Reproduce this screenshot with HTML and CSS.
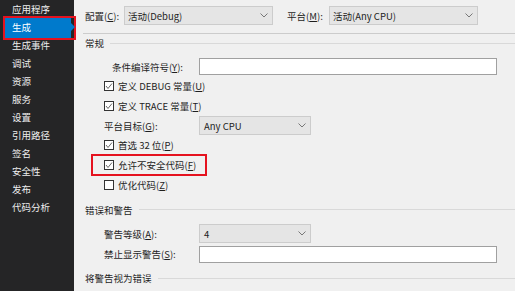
FILE: index.html
```html
<!DOCTYPE html>
<html lang="zh-CN">
<head>
  <meta charset="UTF-8" />
  <meta name="viewport" content="width=device-width, initial-scale=1.0"/>
  <title>生成</title>
  <link rel="stylesheet" href="styles.css">
</head>
<body>
<div class="window">

  <nav class="sidebar">
    <div class="nav-item">应用程序</div>
    <div class="nav-item selected">生成</div>
    <div class="nav-item">生成事件</div>
    <div class="nav-item">调试</div>
    <div class="nav-item">资源</div>
    <div class="nav-item">服务</div>
    <div class="nav-item">设置</div>
    <div class="nav-item">引用路径</div>
    <div class="nav-item">签名</div>
    <div class="nav-item">安全性</div>
    <div class="nav-item">发布</div>
    <div class="nav-item">代码分析</div>
  </nav>

  <main class="page">
    <div class="config-bar">
      <span class="bar-label">配置(<u>C</u>):</span>
      <div class="combo wide">
        <span>活动(Debug)</span>
        <svg class="chevron" width="8" height="5" viewBox="0 0 8 5"><polyline points="0.5,0.5 4,4 7.5,0.5" fill="none" stroke="#777" stroke-width="1"/></svg>
      </div>
      <span class="bar-label second">平台(<u>M</u>):</span>
      <div class="combo wide">
        <span>活动(Any CPU)</span>
        <svg class="chevron" width="8" height="5" viewBox="0 0 8 5"><polyline points="0.5,0.5 4,4 7.5,0.5" fill="none" stroke="#777" stroke-width="1"/></svg>
      </div>
    </div>

    <div class="divider"></div>

    <section class="group">
      <div class="group-title"><span>常规</span><i></i></div>

      <div class="row field first">
        <span class="field-label right">条件编译符号(<u>Y</u>):</span>
        <div class="textbox long"></div>
      </div>

      <div class="row check">
        <span class="box"><svg width="8" height="8" viewBox="0 0 8 8"><polyline points="1,4 3,6.5 7,1.5" fill="none" stroke="#555" stroke-width="0.9"/></svg></span>
        <span>定义 DEBUG 常量(<u>U</u>)</span>
      </div>

      <div class="row check">
        <span class="box"><svg width="8" height="8" viewBox="0 0 8 8"><polyline points="1,4 3,6.5 7,1.5" fill="none" stroke="#555" stroke-width="0.9"/></svg></span>
        <span>定义 TRACE 常量(<u>T</u>)</span>
      </div>

      <div class="row field">
        <span class="field-label">平台目标(<u>G</u>):</span>
        <div class="combo short">
          <span>Any CPU</span>
          <svg class="chevron" width="8" height="5" viewBox="0 0 8 5"><polyline points="0.5,0.5 4,4 7.5,0.5" fill="none" stroke="#777" stroke-width="1"/></svg>
        </div>
      </div>

      <div class="row check">
        <span class="box"><svg width="8" height="8" viewBox="0 0 8 8"><polyline points="1,4 3,6.5 7,1.5" fill="none" stroke="#555" stroke-width="0.9"/></svg></span>
        <span>首选 32 位(<u>P</u>)</span>
      </div>

      <div class="row check marked">
        <span class="box"><svg width="8" height="8" viewBox="0 0 8 8"><polyline points="1,4 3,6.5 7,1.5" fill="none" stroke="#555" stroke-width="0.9"/></svg></span>
        <span>允许不安全代码(<u>F</u>)</span>
      </div>

      <div class="row check">
        <span class="box"></span>
        <span>优化代码(<u>Z</u>)</span>
      </div>
    </section>

    <section class="group errors">
      <div class="group-title"><span>错误和警告</span><i></i></div>

      <div class="row field level">
        <span class="field-label">警告等级(<u>A</u>):</span>
        <div class="combo short">
          <span>4</span>
          <svg class="chevron" width="8" height="5" viewBox="0 0 8 5"><polyline points="0.5,0.5 4,4 7.5,0.5" fill="none" stroke="#777" stroke-width="1"/></svg>
        </div>
      </div>

      <div class="row field">
        <span class="field-label">禁止显示警告(<u>S</u>):</span>
        <div class="textbox long"></div>
      </div>
    </section>

    <section class="group treat">
      <div class="group-title"><span>将警告视为错误</span><i></i></div>
    </section>
  </main>

</div>
</body>
</html>
```

FILE: styles.css
```css
html, body {
  margin: 0;
  height: 100%;
  overflow: hidden;
}
body {
  font-family: "Noto Sans CJK SC", "Noto Sans", sans-serif;
  font-size: 9.5px;
  color: #1e1e1e;
  background-color: #f0f0f0;
}
u {
  text-decoration-thickness: 1px;
  text-underline-offset: 1px;
}
.window {
  display: flex;
  height: 291px;
}

/* left navigation */
.sidebar {
  width: 74px;
  flex: none;
  background-color: #252526;
  color: #eeeeee;
}
.nav-item {
  height: 18px;
  line-height: 18px;
  padding-left: 12px;
  white-space: nowrap;
}
.nav-item.selected {
  position: relative;
  height: 21px;
  line-height: 21px;
  margin: -1px 3px -2px 4px;
  padding-left: 8px;
  background-color: #007acc;
  color: #ffffff;
}
.nav-item.selected::after {
  content: "";
  position: absolute;
  right: -4px;
  top: 6px;
  border-left: 4px solid #007acc;
  border-top: 4px solid transparent;
  border-bottom: 4px solid transparent;
}
.nav-item.selected::before {
  content: "";
  position: absolute;
  left: -1px;
  right: -5px;
  top: -1px;
  bottom: -2px;
  border: 2px solid #e5121f;
}

/* main page */
.page {
  flex: 1;
  padding-left: 11px;
  min-width: 0;
}
.config-bar {
  display: flex;
  align-items: center;
  height: 19px;
  margin-top: 6px;
}
.bar-label {
  width: 39px;
  flex: none;
  white-space: nowrap;
}
.bar-label.second {
  width: 42px;
  margin-left: 14px;
}
.combo {
  box-sizing: border-box;
  display: flex;
  align-items: center;
  justify-content: space-between;
  height: 19px;
  padding: 0 3px 0 3px;
  background-color: #e5e5e5;
  border: 1px solid #cccccc;
  white-space: nowrap;
}
.combo.wide {
  width: 149px;
}
.combo.short {
  width: 112px;
  padding-left: 4px;
}
.chevron {
  margin-right: 1px;
}
.divider {
  height: 1px;
  margin: 8px 0 0 -2px;
  background-color: #cccccc;
}

.group-title {
  display: flex;
  align-items: center;
  height: 18px;
  white-space: nowrap;
}
.group-title i {
  flex: 1;
  height: 1px;
  margin-left: 6px;
  background-color: #d9d9d9;
}

.row {
  display: flex;
  align-items: center;
  height: 19.67px;
  padding-left: 19px;
  white-space: nowrap;
}
.row.first {
  margin-top: 5px;
}
.field-label {
  width: 95px;
  flex: none;
}
.field-label.right {
  box-sizing: border-box;
  text-align: right;
  padding-right: 16px;
}
.textbox {
  box-sizing: border-box;
  height: 17px;
  background-color: #ffffff;
  border: 1px solid #a0a0a0;
}
.textbox.long {
  width: 298px;
}

.check .box {
  box-sizing: border-box;
  display: flex;
  align-items: center;
  justify-content: center;
  width: 10px;
  height: 10px;
  margin-right: 4px;
  background-color: #ffffff;
  border: 1px solid #333333;
}
.row.marked {
  position: relative;
  width: max-content;
}
.row.marked::after {
  content: "";
  position: absolute;
  left: 6px;
  width: 116px;
  top: -1px;
  bottom: -1px;
  box-sizing: border-box;
  border: 2px solid #e5121f;
}

.errors {
  margin-top: 6px;
}
.row.level {
  margin-top: 4px;
  height: 22px;
}
.treat {
  margin-top: 5px;
}
```
